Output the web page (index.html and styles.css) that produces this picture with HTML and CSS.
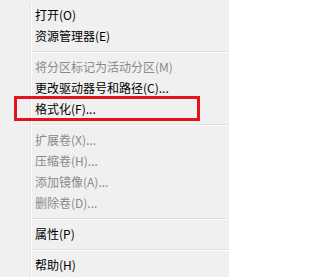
FILE: index.html
```html
<!DOCTYPE html>
<html lang="zh-CN">
<head>
<meta charset="utf-8">
<link rel="stylesheet" href="styles.css">
</head>
<body>
<div class="menu">
  <ul class="items">
    <li class="item">打开(O)</li>
    <li class="item">资源管理器(E)</li>
    <li class="sep"></li>
    <li class="item disabled">将分区标记为活动分区(M)</li>
    <li class="item">更改驱动器号和路径(C)...</li>
    <li class="item highlighted">格式化(F)...</li>
    <li class="sep"></li>
    <li class="item disabled">扩展卷(X)...</li>
    <li class="item disabled">压缩卷(H)...</li>
    <li class="item disabled">添加镜像(A)...</li>
    <li class="item disabled">删除卷(D)...</li>
    <li class="sep"></li>
    <li class="item">属性(P)</li>
    <li class="sep"></li>
    <li class="item">帮助(H)</li>
  </ul>
</div>
</body>
</html>
```
FILE: styles.css
```css
html, body {
  margin: 0;
  padding: 0;
  background: #ffffff;
}

.menu {
  width: 229px;
  height: 277px;
  box-sizing: border-box;
  background: #f0f0f0;
  padding-top: 4px;
  font-family: "Noto Sans CJK SC", "Microsoft YaHei", sans-serif;
  font-size: 12px;
  color: #000;
  overflow: hidden;
}

.items {
  list-style: none;
  margin: 0 0 0 30px;
  padding: 0;
  height: 100%;
  border-left: 1px solid #e2e3e3;
  box-shadow: inset 1px 0 0 #ffffff;
}

.item {
  position: relative;
  height: 21px;
  line-height: 21px;
  padding-left: 4px;
  white-space: nowrap;
}

.item.disabled {
  color: #8a8a8a;
}

.item.highlighted::after {
  content: "";
  position: absolute;
  left: -17px;
  top: -2px;
  width: 186px;
  height: 25px;
  box-sizing: border-box;
  border: 3px solid #e3141b;
}

.sep {
  height: 1px;
  margin: 5px 0 3px 1px;
  background: #e0e0e0;
  border-bottom: 1px solid #ffffff;
}
```
